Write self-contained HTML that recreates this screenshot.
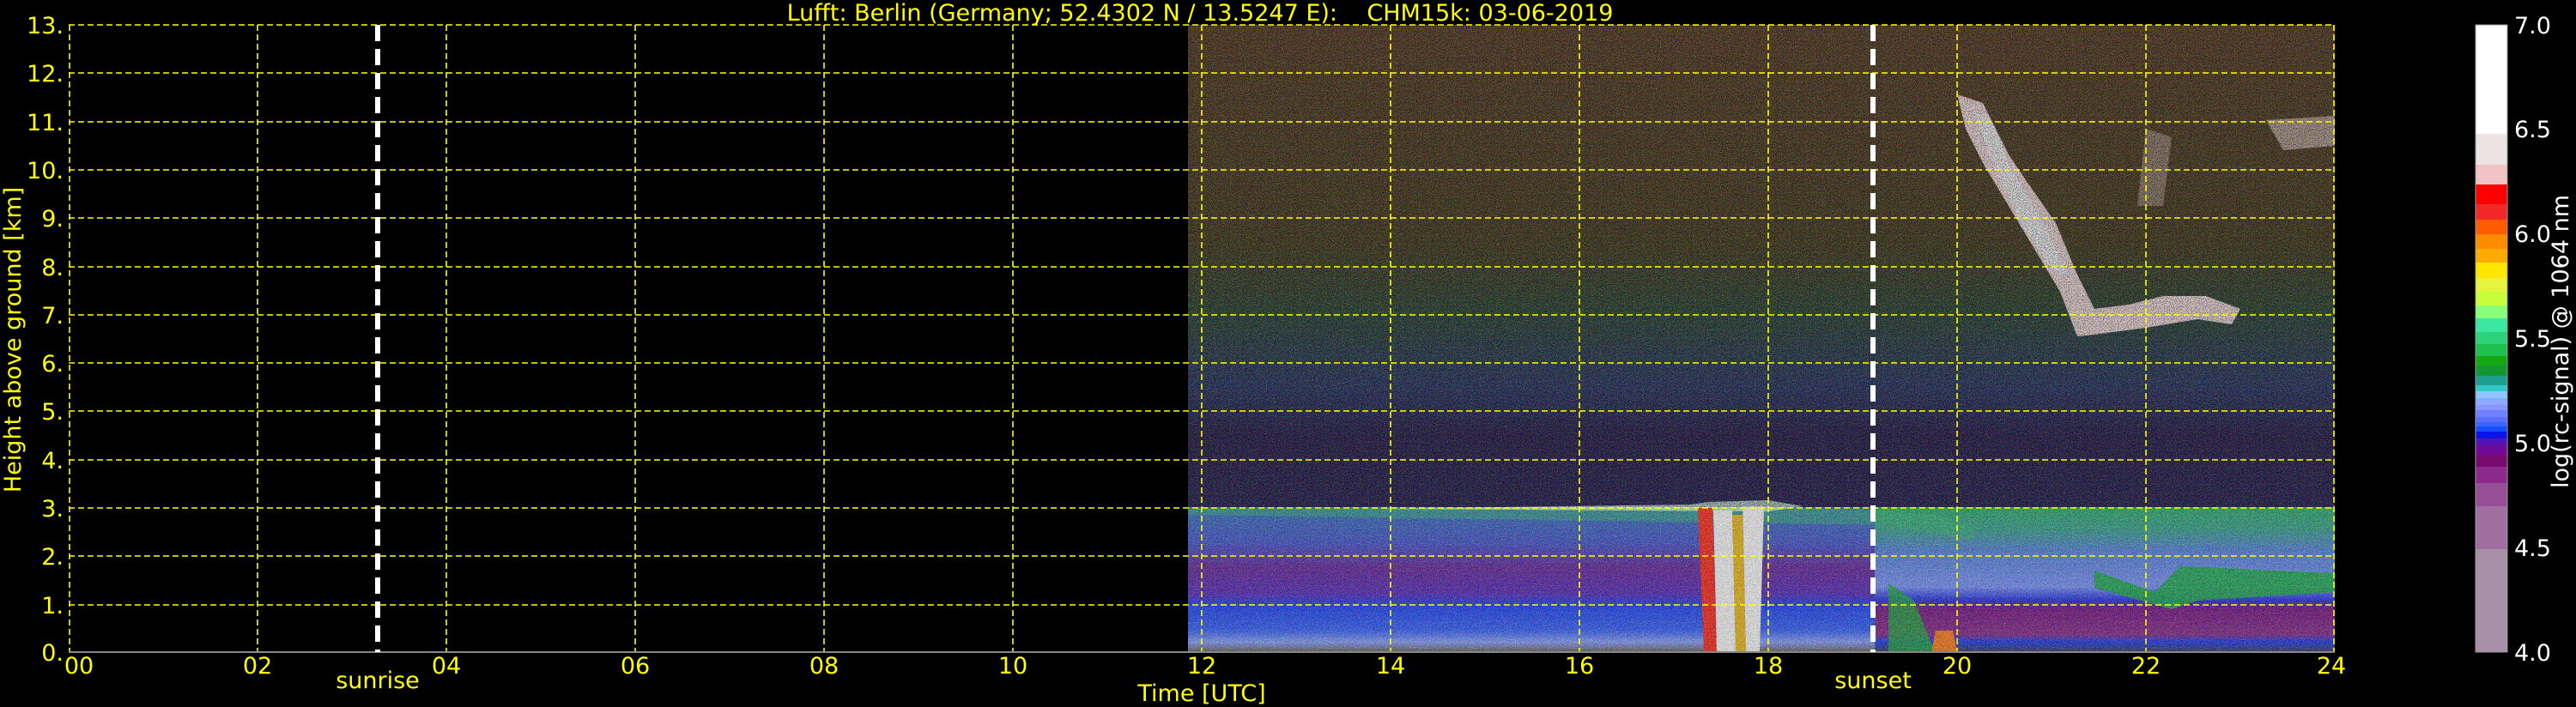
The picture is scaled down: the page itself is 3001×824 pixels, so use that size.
<!DOCTYPE html>
<html><head><meta charset="utf-8"><style>
html,body{margin:0;padding:0;background:#000;}
svg{display:block}
text{font-family:"DejaVu Sans","Liberation Sans",sans-serif;fill:#ffff00;font-size:27px}
</style></head><body>
<svg width="3001" height="824" viewBox="0 0 3001 824" xmlns="http://www.w3.org/2000/svg">
<defs>
<filter id="nz" x="0" y="0" width="100%" height="100%">
<feTurbulence type="fractalNoise" baseFrequency="0.9" numOctaves="1" seed="3" result="t"/>
<feColorMatrix in="t" type="matrix" values="8 -3 -3 0 -1.2  -3 8 -3 0 -1.2  -3 -3 8 0 -1.2  0 0 0 0 0.28"/>
</filter>
<filter id="nz2" x="0" y="0" width="100%" height="100%">
<feTurbulence type="fractalNoise" baseFrequency="0.95" numOctaves="1" seed="9" result="t"/>
<feColorMatrix in="t" type="matrix" values="0 0 0 0 0  0 0 0 0 0  0 0 0 0 0  -6 0 0 0 3.1"/>
</filter>
<linearGradient id="lowL" x1="0" y1="0" x2="0" y2="1">
<stop offset="0" stop-color="#3a78c0"/>
<stop offset="0.25" stop-color="#4a5ad0"/>
<stop offset="0.42" stop-color="#6a2ca0"/>
<stop offset="0.6" stop-color="#5a30c0"/>
<stop offset="0.68" stop-color="#2248f8"/>
<stop offset="0.85" stop-color="#3c66ff"/>
<stop offset="0.93" stop-color="#8ca6ff"/>
<stop offset="0.97" stop-color="#7a80b0"/>
<stop offset="1" stop-color="#6a6a40"/>
</linearGradient>
<linearGradient id="lowR" x1="0" y1="0" x2="0" y2="1">
<stop offset="0" stop-color="#30b070"/>
<stop offset="0.15" stop-color="#3ca890"/>
<stop offset="0.3" stop-color="#5a88e0"/>
<stop offset="0.55" stop-color="#7e98ff"/>
<stop offset="0.64" stop-color="#2a38e8"/>
<stop offset="0.7" stop-color="#7a1a88"/>
<stop offset="0.88" stop-color="#8a3090"/>
<stop offset="0.93" stop-color="#2040f0"/>
<stop offset="1" stop-color="#404060"/>
</linearGradient>
<linearGradient id="up" x1="0" y1="0" x2="0" y2="1">
<stop offset="0" stop-color="#5c4026"/>
<stop offset="0.45" stop-color="#4a4020"/>
<stop offset="0.6" stop-color="#2e4a38"/>
<stop offset="0.75" stop-color="#2c3a6a"/>
<stop offset="0.85" stop-color="#2a2050"/>
<stop offset="1" stop-color="#2a2458"/>
</linearGradient>
</defs>

<rect x="1384" y="29" width="1336" height="562" fill="url(#up)"/>
<rect x="1384" y="591" width="800" height="169" fill="url(#lowL)"/>
<rect x="2184" y="591" width="536" height="169" fill="url(#lowR)"/>
<path d="M2440 665 L2510 690 L2540 660 L2720 668 L2720 690 L2560 700 L2530 710 L2440 685 Z" fill="#20b050" opacity="0.9"/>
<path d="M1384 592 L2000 590 L2200 595 L2260 600 L2300 615 L2300 630 L2200 612 L1384 600 Z" fill="#3cc07a" opacity="0.5"/>
<path d="M1600 593 L1970 588 L1990 585 L2060 583 L2100 590 L2060 596 Z" fill="#e0ffe8" opacity="0.8"/>
<path d="M1978 592 L1995 592 L2000 760 L1985 760 Z" fill="#ff3020"/>
<path d="M1996 595 L2018 595 L2022 760 L2000 760 Z" fill="#ffffff"/>
<path d="M2018 600 L2030 600 L2034 760 L2022 760 Z" fill="#f0c020"/>
<path d="M2030 590 L2055 590 L2050 760 L2034 760 Z" fill="#ffffff"/>
<path d="M2200 680 L2230 700 L2250 750 L2270 760 L2200 760 Z" fill="#20b040" opacity="0.8"/>
<path d="M2255 735 L2275 735 L2280 760 L2250 760 Z" fill="#ff8020"/>
<path d="M2280 110 L2310 120 L2340 180 L2360 210 L2395 260 L2420 320 L2440 360 L2480 355 L2520 345 L2570 345 L2610 360 L2600 378 L2560 372 L2500 382 L2440 390 L2420 392 L2400 340 L2370 290 L2340 240 L2310 190 L2290 150 Z" fill="#ffe8e8"/>
<path d="M2300 130 L2320 140 L2340 190 L2380 260 L2410 320 L2395 320 L2360 270 L2325 200 Z" fill="#ffffff"/>
<path d="M2640 140 L2720 135 L2720 170 L2660 175 Z" fill="#ffe8e0" opacity="0.6"/>
<path d="M2500 150 L2530 160 L2520 240 L2490 240 Z" fill="#ffe0e0" opacity="0.4"/>
<rect x="1384" y="29" width="1336" height="731" filter="url(#nz)"/>
<rect x="1384" y="29" width="1336" height="562" filter="url(#nz2)" opacity="0.45"/>

<g stroke="#ffff00" stroke-width="1.6" stroke-dasharray="7,4">
<line x1="80" y1="29" x2="2720" y2="29"/><line x1="80" y1="85" x2="2720" y2="85"/>
<line x1="80" y1="142" x2="2720" y2="142"/><line x1="80" y1="198" x2="2720" y2="198"/>
<line x1="80" y1="254" x2="2720" y2="254"/><line x1="80" y1="311" x2="2720" y2="311"/>
<line x1="80" y1="367" x2="2720" y2="367"/><line x1="80" y1="423" x2="2720" y2="423"/>
<line x1="80" y1="479" x2="2720" y2="479"/><line x1="80" y1="536" x2="2720" y2="536"/>
<line x1="80" y1="592" x2="2720" y2="592"/><line x1="80" y1="648" x2="2720" y2="648"/>
<line x1="80" y1="705" x2="2720" y2="705"/>
<line x1="81" y1="29" x2="81" y2="760"/><line x1="300" y1="29" x2="300" y2="760"/>
<line x1="520" y1="29" x2="520" y2="760"/><line x1="740" y1="29" x2="740" y2="760"/>
<line x1="960" y1="29" x2="960" y2="760"/><line x1="1180" y1="29" x2="1180" y2="760"/>
<line x1="1400" y1="29" x2="1400" y2="760"/><line x1="1620" y1="29" x2="1620" y2="760"/>
<line x1="1840" y1="29" x2="1840" y2="760"/><line x1="2060" y1="29" x2="2060" y2="760"/>
<line x1="2280" y1="29" x2="2280" y2="760"/><line x1="2500" y1="29" x2="2500" y2="760"/>
<line x1="2719" y1="29" x2="2719" y2="760"/>
</g>
<line x1="80" y1="760" x2="2720" y2="760" stroke="#888" stroke-width="2"/>
<g stroke="#fff" stroke-width="6" stroke-dasharray="19,9">
<line x1="440" y1="29" x2="440" y2="760"/>
<line x1="2182" y1="29" x2="2182" y2="760"/>
</g>

<g text-anchor="end">
<text x="74" y="39">13.</text><text x="74" y="95">12.</text><text x="74" y="152">11.</text>
<text x="74" y="208">10.</text><text x="74" y="264">9.</text><text x="74" y="321">8.</text>
<text x="74" y="377">7.</text><text x="74" y="433">6.</text><text x="74" y="489">5.</text>
<text x="74" y="546">4.</text><text x="74" y="602">3.</text><text x="74" y="658">2.</text>
<text x="74" y="715">1.</text><text x="74" y="770">0.</text>
</g>
<g text-anchor="middle">
<text x="92" y="785">00</text><text x="300" y="785">02</text><text x="520" y="785">04</text>
<text x="740" y="785">06</text><text x="960" y="785">08</text><text x="1180" y="785">10</text>
<text x="1400" y="785">12</text><text x="1620" y="785">14</text><text x="1840" y="785">16</text>
<text x="2060" y="785">18</text><text x="2280" y="785">20</text><text x="2500" y="785">22</text>
<text x="2716" y="785">24</text>
<text x="440" y="802">sunrise</text><text x="2182" y="802">sunset</text>
<text x="1400" y="817">Time [UTC]</text>
<text x="1398" y="24" style="white-space:pre" xml:space="preserve">Lufft: Berlin (Germany; 52.4302 N / 13.5247 E):    CHM15k: 03-06-2019</text>
</g>
<text transform="translate(24,396) rotate(-90)" text-anchor="middle">Height above ground [km]</text>

<g>
<rect x="2884" y="29" width="37" height="127" fill="#ffffff"/>
<rect x="2884" y="156" width="37" height="36" fill="#ece4e4"/>
<rect x="2884" y="192" width="37" height="23" fill="#f0c4c4"/>
<rect x="2884" y="215" width="37" height="23" fill="#ff0000"/>
<rect x="2884" y="238" width="37" height="18" fill="#f02828"/>
<rect x="2884" y="256" width="37" height="17" fill="#ff5a00"/>
<rect x="2884" y="273" width="37" height="17" fill="#ff8c00"/>
<rect x="2884" y="290" width="37" height="16" fill="#ffaa00"/>
<rect x="2884" y="306" width="37" height="18" fill="#ffe600"/>
<rect x="2884" y="324" width="37" height="16" fill="#e6f53c"/>
<rect x="2884" y="340" width="37" height="16" fill="#c8ff3c"/>
<rect x="2884" y="356" width="37" height="15" fill="#88ff78"/>
<rect x="2884" y="371" width="37" height="16" fill="#3ce8a0"/>
<rect x="2884" y="387" width="37" height="14" fill="#2ed27a"/>
<rect x="2884" y="401" width="37" height="14" fill="#1ec050"/>
<rect x="2884" y="415" width="37" height="11" fill="#14a814"/>
<rect x="2884" y="426" width="37" height="12" fill="#149632"/>
<rect x="2884" y="438" width="37" height="11" fill="#1e9e8c"/>
<rect x="2884" y="449" width="37" height="7" fill="#32c8c8"/>
<rect x="2884" y="456" width="37" height="8" fill="#8cc8ff"/>
<rect x="2884" y="464" width="37" height="8" fill="#8caaff"/>
<rect x="2884" y="472" width="37" height="6" fill="#8c96ff"/>
<rect x="2884" y="478" width="37" height="8" fill="#6e82ff"/>
<rect x="2884" y="486" width="37" height="6" fill="#5a6eff"/>
<rect x="2884" y="492" width="37" height="5" fill="#3c64ff"/>
<rect x="2884" y="497" width="37" height="6" fill="#1450ff"/>
<rect x="2884" y="503" width="37" height="8" fill="#0a14e6"/>
<rect x="2884" y="511" width="37" height="8" fill="#5014b4"/>
<rect x="2884" y="519" width="37" height="11" fill="#6e0a96"/>
<rect x="2884" y="530" width="37" height="14" fill="#780a6e"/>
<rect x="2884" y="544" width="37" height="19" fill="#8c2a8c"/>
<rect x="2884" y="563" width="37" height="27" fill="#964e96"/>
<rect x="2884" y="590" width="37" height="50" fill="#a06ea0"/>
<rect x="2884" y="640" width="37" height="120" fill="#a890a8"/>
<rect x="2884" y="29" width="37" height="731" fill="none" stroke="#999" stroke-width="1"/>
</g>
<g>
<text x="2929" y="39" style="fill:#fff">7.0</text>
<text x="2929" y="160" style="fill:#fff">6.5</text>
<text x="2929" y="282" style="fill:#fff">6.0</text>
<text x="2929" y="404" style="fill:#fff">5.5</text>
<text x="2929" y="526" style="fill:#fff">5.0</text>
<text x="2929" y="648" style="fill:#fff">4.5</text>
<text x="2929" y="770" style="fill:#fff">4.0</text>
</g>
<text transform="translate(2992,398) rotate(-90)" text-anchor="middle" style="fill:#fff">log(rc-signal) @ 1064 nm</text>
</svg>
</body></html>
